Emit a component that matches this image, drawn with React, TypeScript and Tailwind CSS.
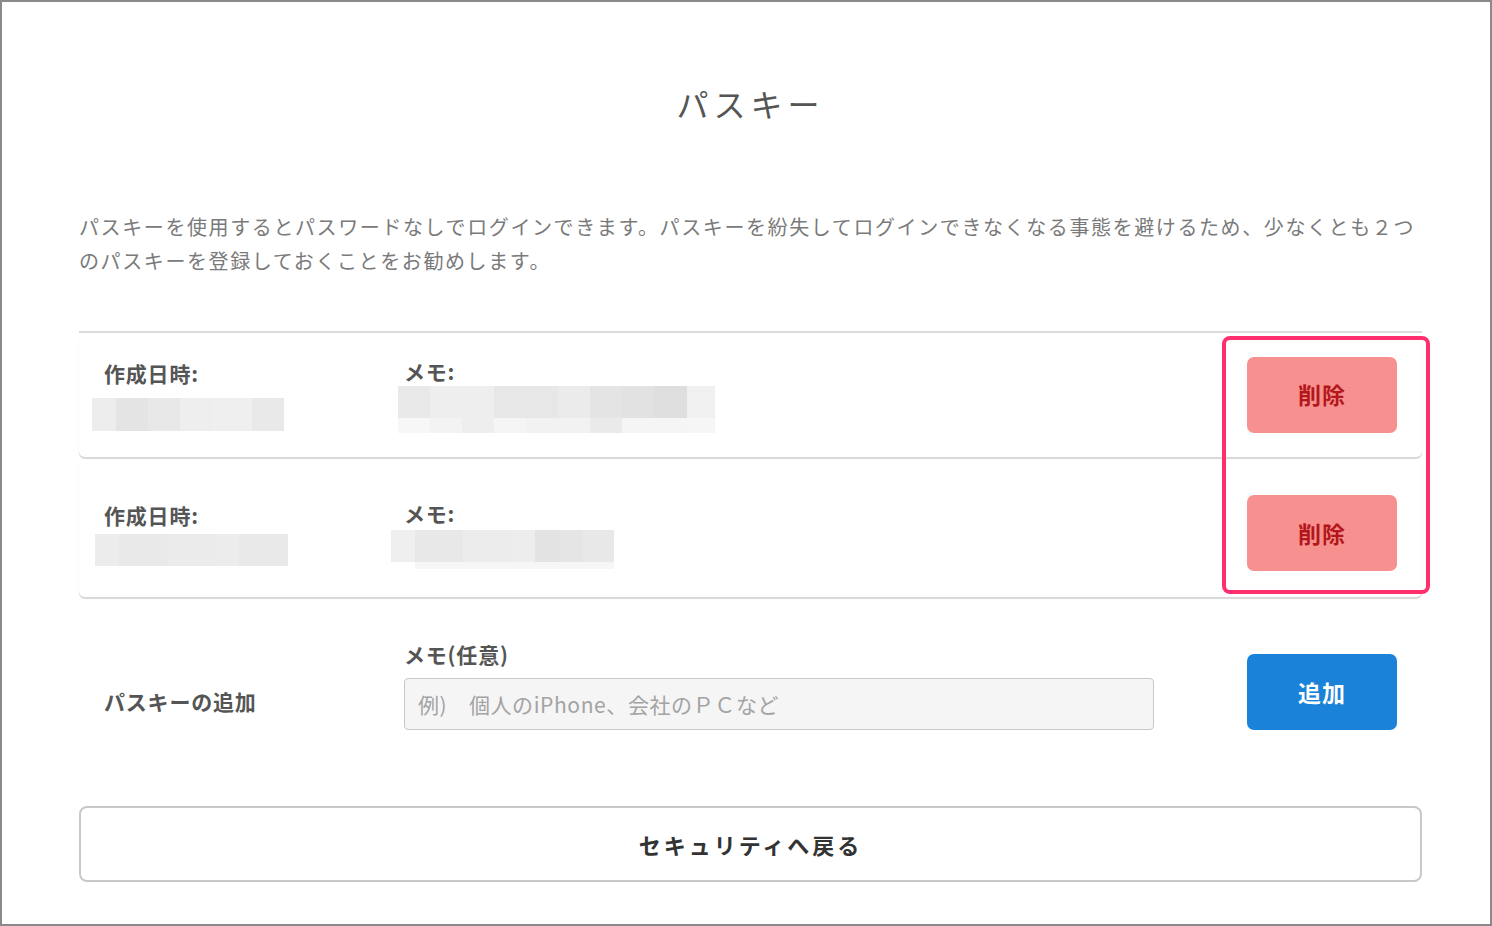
import React from "react";

const font = { fontFamily: '"Noto Sans CJK JP", "Noto Sans", sans-serif' };

type Cell = { w: number; c: string };

const Mosaic = ({ top, bottom, h, bh, className }: { top: Cell[]; bottom?: Cell[]; h: number; bh?: number; className: string }) => (
  <div className={`flex flex-col ${className}`}>
    <div className="flex">
      {top.map((cell, i) => (
        <div key={i} style={{ width: cell.w, height: h, background: cell.c }} />
      ))}
    </div>
    {bottom && (
      <div className="flex">
        {bottom.map((cell, i) => (
          <div key={i} style={{ width: cell.w, height: bh, background: cell.c }} />
        ))}
      </div>
    )}
  </div>
);

const DeleteButton = () => (
  <button className="w-[150px] h-[76px] rounded-[7px] bg-[#f79190] text-[#b3161b] text-[23px] font-bold shrink-0 tracking-[1px]">
    削除
  </button>
);

const Label = ({ children }: { children: React.ReactNode }) => (
  <p className="text-[21px] leading-[30px] font-bold text-[#555] tracking-[0.8px]">{children}</p>
);

export default function App() {
  return (
    <div style={font} className="relative w-[1492px] h-[926px] border-2 border-[#8a8a8a] bg-white overflow-hidden">
      <div className="pl-[77px] pr-[68px] pt-[77px]">
        <h1 className="text-center text-[32px] leading-[48px] text-[#555] tracking-[5px]">パスキー</h1>
        <p className="mt-[83px] text-[20px] leading-[34px] text-[#7a7a7a] tracking-[1.6px]">
          パスキーを使用するとパスワードなしでログインできます。パスキーを紛失してログインできなくなる事態を避けるため、少なくとも２つのパスキーを登録しておくことをお勧めします。
        </p>

        <div className="mt-[53px] border-t-2 border-[#dadada]">
          <div className="flex items-center pl-[25px] pr-[25px] pt-[23px] pb-[24px] rounded-[6px] shadow-[0_2px_1px_rgba(0,0,0,0.16)]">
            <div className="w-[300px]">
              <Label>作成日時:</Label>
              <Mosaic
                className="mt-[10px] ml-[-12px]"
                h={33}
                top={[
                  { w: 24, c: "#ededed" },
                  { w: 32, c: "#e4e4e4" },
                  { w: 32, c: "#e8e8e8" },
                  { w: 32, c: "#eeeeee" },
                  { w: 40, c: "#efefef" },
                  { w: 32, c: "#e9e9e9" },
                ]}
              />
            </div>
            <div className="flex-1">
              <Label>メモ:</Label>
              <Mosaic
                className="ml-[-6px]"
                h={32}
                bh={15}
                top={[
                  { w: 32, c: "#e9e9e9" },
                  { w: 64, c: "#eeeeee" },
                  { w: 64, c: "#e7e7e7" },
                  { w: 32, c: "#ebebeb" },
                  { w: 32, c: "#e4e4e4" },
                  { w: 32, c: "#e2e2e2" },
                  { w: 32, c: "#dedede" },
                  { w: 1, c: "#dedede" },
                  { w: 28, c: "#f0f0f0" },
                ]}
                bottom={[
                  { w: 32, c: "#f7f7f7" },
                  { w: 32, c: "#f3f3f3" },
                  { w: 32, c: "#eeeeee" },
                  { w: 32, c: "#f5f5f5" },
                  { w: 64, c: "#f2f2f2" },
                  { w: 32, c: "#eaeaea" },
                  { w: 64, c: "#f5f5f5" },
                  { w: 29, c: "#f6f6f6" },
                ]}
              />
            </div>
            <DeleteButton />
          </div>

          <div className="flex items-center pl-[25px] pr-[25px] pt-[38px] pb-[26px] rounded-[6px] shadow-[0_2px_1px_rgba(0,0,0,0.16)]">
            <div className="w-[300px]">
              <Label>作成日時:</Label>
              <Mosaic
                className="mt-[4px] ml-[-9px]"
                h={32}
                top={[
                  { w: 24, c: "#ececec" },
                  { w: 48, c: "#e9e9e9" },
                  { w: 48, c: "#ebebeb" },
                  { w: 24, c: "#ececec" },
                  { w: 49, c: "#e9e9e9" },
                ]}
              />
            </div>
            <div className="flex-1">
              <Label>メモ:</Label>
              <Mosaic
                className="mt-[2px] ml-[-13px]"
                h={32}
                bh={7}
                top={[
                  { w: 24, c: "#efefef" },
                  { w: 48, c: "#e8e8e8" },
                  { w: 48, c: "#ececec" },
                  { w: 24, c: "#ededed" },
                  { w: 24, c: "#e3e3e3" },
                  { w: 24, c: "#e5e5e5" },
                  { w: 31, c: "#e8e8e8" },
                ]}
                bottom={[
                  { w: 24, c: "#ffffff" },
                  { w: 199, c: "#f6f6f6" },
                ]}
              />
            </div>
            <DeleteButton />
          </div>
        </div>

        <div className="flex items-end pl-[25px] pr-[25px] pt-[42px]">
          <div className="w-[300px] mb-[14px]">
            <Label>パスキーの追加</Label>
          </div>
          <div className="w-[750px]">
            <Label>メモ(任意)</Label>
            <input
              style={font}
              placeholder="例)　個人のiPhone、会社のＰＣなど"
              className="mt-[9px] w-full h-[52px] bg-[#f5f5f5] border border-[#c8c8c8] rounded-[4px] pl-[13px] text-[21px] tracking-[0.6px] text-[#555] placeholder:text-[#a3a3a3] outline-none"
            />
          </div>
          <div className="flex-1" />
          <button className="w-[150px] h-[76px] rounded-[7px] bg-[#1b82d9] text-white text-[23px] font-bold shrink-0 tracking-[1px]">
            追加
          </button>
        </div>

        <button className="mt-[76px] w-full h-[76px] border-2 border-[#c8c8c8] rounded-[8px] bg-white text-[22px] font-bold text-[#333] tracking-[3px]">
          セキュリティへ戻る
        </button>
      </div>

      <div className="absolute left-[1220px] top-[334px] w-[208px] h-[258px] border-4 border-[#fe2f6c] rounded-[8px] pointer-events-none" />
    </div>
  );
}
